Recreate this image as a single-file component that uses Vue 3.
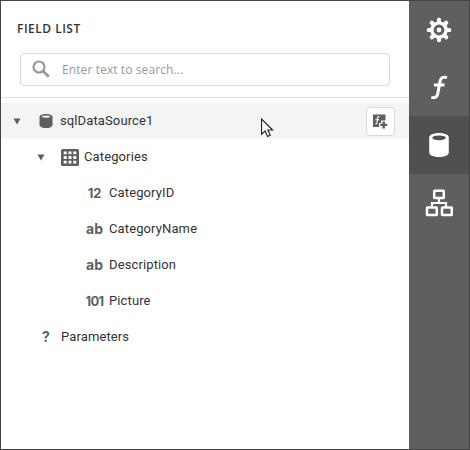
<script setup>
const rows = [
  { label: 'sqlDataSource1', level: 0, icon: 'database', open: true, selected: true },
  { label: 'Categories', level: 1, icon: 'table', open: true },
  { label: 'CategoryID', level: 2, glyph: '12' },
  { label: 'CategoryName', level: 2, glyph: 'ab' },
  { label: 'Description', level: 2, glyph: 'ab' },
  { label: 'Picture', level: 2, glyph: '101' },
  { label: 'Parameters', level: 0, glyph: '?', root: true },
]
</script>

<template>
  <div class="window">
    <main class="panel">
      <header class="head">
        <h1 class="title">FIELD LIST</h1>
        <div class="search">
          <svg class="search-icon" width="18" height="18" viewBox="0 0 18 18">
            <circle cx="7" cy="7" r="5.5" fill="none" stroke="#999" stroke-width="2.2" />
            <path d="M11 11L16.8 16.8" stroke="#999" stroke-width="2.8" />
          </svg>
          <span class="placeholder">Enter text to search...</span>
        </div>
      </header>
      <ul class="tree">
        <li v-for="row in rows" :key="row.label" class="row" :class="['level-' + row.level, { selected: row.selected, root: row.root }]">
          <span class="arrow">
            <svg v-if="row.open" width="8" height="7" viewBox="0 0 8 7"><path d="M.5 0.5H7.5L4 6.5Z" fill="#5f5f5f" /></svg>
          </span>
          <span class="icon">
            <svg v-if="row.icon === 'database'" width="14" height="16" viewBox="0 0 14 16">
              <path d="M.5 4C.5 -.1 13.5 -.1 13.5 4V12C13.5 16.1 .5 16.1 .5 12Z" fill="#5f5f5f" />
              <ellipse cx="7" cy="3.6" rx="4" ry="1.2" fill="#f4f4f4" />
            </svg>
            <svg v-else-if="row.icon === 'table'" width="18" height="17" viewBox="0 0 18 17">
              <rect width="18" height="17" rx="1.5" fill="#5f5f5f" />
              <path d="M2.7 2.5h3v2.7h-3zM7.5 2.5h3v2.7h-3zM12.3 2.5h3v2.7h-3zM2.7 7.1h3v2.8h-3zM7.5 7.1h3v2.8h-3zM12.3 7.1h3v2.8h-3zM2.7 11.8h3v2.7h-3zM7.5 11.8h3v2.7h-3zM12.3 11.8h3v2.7h-3z" fill="#fff" />
            </svg>
            <span v-else class="glyph" :class="{ number: row.level === 2 && row.glyph !== 'ab', binary: row.glyph === '101' }">{{ row.glyph }}</span>
          </span>
          <span class="label">{{ row.label }}</span>
          <button v-if="row.selected" class="add" aria-label="Add calculated field">
            <svg width="15" height="15" viewBox="0 0 15 15">
              <path d="M0 .5H12.5V13H0Z" fill="#5f5f5f" />
              <path d="M8 6.5H15V15H6V9H8Z" fill="#fff" />
              <path d="M6.5 2.6H5.6Q4.7 2.6 4.6 3.6L4.1 8.6Q3.9 10 2.2 10M2.5 5.7H6" fill="none" stroke="#eee" stroke-width="1.2" />
              <path d="M10.7 7.4V14.4M7.2 10.9H14.2" stroke="#5f5f5f" stroke-width="2.4" />
            </svg>
          </button>
        </li>
      </ul>
    </main>
    <nav class="tabs">
      <button class="tab" aria-label="Properties">
        <svg width="26" height="26" viewBox="0 0 26 26">
          <g fill="#fff">
            <rect v-for="a in [0, 45, 90, 135]" :key="a" x="11" y=".8" width="4" height="24.4" rx="1.6" :transform="`rotate(${a} 13 13)`" />
            <circle cx="13" cy="13" r="8.8" />
          </g>
          <circle cx="13" cy="13" r="3.9" fill="#fff" stroke="#5f5f5f" stroke-width="3" />
        </svg>
      </button>
      <button class="tab" aria-label="Expressions">
        <svg width="26" height="26" viewBox="0 0 26 26">
          <path d="M21 2.6Q15.2 .8 14.2 5.9L11.7 18.9Q10.8 23.7 5.3 22.4M8 10H18.5" fill="none" stroke="#fff" stroke-width="3" />
        </svg>
      </button>
      <button class="tab active" aria-label="Field list">
        <svg width="26" height="26" viewBox="0 0 26 26">
          <path d="M3.2 5.5C3.2 -.5 22.8 -.5 22.8 5.5V20.6C22.8 26.6 3.2 26.6 3.2 20.6Z" fill="#fff" />
          <ellipse cx="13" cy="5.8" rx="6.7" ry="2.4" fill="#505050" />
        </svg>
      </button>
      <button class="tab" aria-label="Report explorer">
        <svg width="28" height="28" viewBox="0 0 28 28">
          <g fill="none" stroke="#fff" stroke-width="2.5">
            <rect x="9.2" y="1.7" width="9.6" height="7.4" rx=".6" />
            <rect x="2" y="18.4" width="9.8" height="7.6" rx=".6" />
            <rect x="17" y="18.4" width="9.8" height="7.6" rx=".6" />
            <path d="M14 10V14M7 18V14H21V18" stroke-width="2.2" />
          </g>
        </svg>
      </button>
    </nav>
    <svg class="pointer" width="13" height="20" viewBox="0 0 13 20">
      <path d="M.6 1V16.2L4.2 12.9L6.5 18.4L9.2 17.2L6.9 12H11.6Z" fill="#fff" stroke="#1d1d2c" stroke-width="1.1" />
    </svg>
  </div>
</template>

<style>
body { margin: 0; }
</style>

<style scoped>
.window {
  position: relative;
  box-sizing: border-box;
  display: flex;
  width: 470px;
  height: 450px;
  border: 1px solid #444;
  background: #fff;
}
.panel { flex: 1; min-width: 0; }
.head {
  box-sizing: border-box;
  height: 97px;
  padding: 19px 19px 0;
  border-bottom: 1px solid #e0e0e0;
}
.title {
  margin: 0 0 15px -3px;
  font: 600 12px/18px "Open Sans", sans-serif;
  letter-spacing: 0.5px;
  color: #333;
}
.search {
  box-sizing: border-box;
  display: flex;
  align-items: center;
  width: 370px;
  height: 33px;
  padding-left: 11px;
  border: 1px solid #dadada;
  border-radius: 4px;
}
.search-icon { margin-top: -2px; }
.placeholder {
  margin-left: 12px;
  font: 12px/18px "Open Sans", sans-serif;
  letter-spacing: 0.1px;
  color: #999;
}
.tree { list-style: none; margin: 0; padding: 5px 0 0; }
.row {
  box-sizing: border-box;
  display: flex;
  align-items: center;
  height: 36px;
  padding-right: 14px;
}
.selected { background: #f4f4f4; }
.level-0 { padding-left: 12px; }
.level-1 { padding-left: 36px; }
.level-2 { padding-left: 61px; }
.arrow { display: flex; width: 8px; }
.icon {
  display: flex;
  justify-content: center;
  width: 20px;
  margin-left: 15px;
}
.level-2 .icon { padding-right: 1px; width: 19px; }
.glyph {
  font: 700 14px/18px Inter, sans-serif;
  color: #5f5f5f;
}
.number { font-size: 13px; letter-spacing: -0.2px; }
.binary { letter-spacing: -0.7px; }
.label {
  margin-left: 4px;
  font: 13px/18px Roboto, sans-serif;
  letter-spacing: 0.12px;
  color: #333;
}
.root .label { margin-left: 5px; }
.add {
  display: flex;
  align-items: center;
  justify-content: center;
  box-sizing: border-box;
  width: 29px;
  height: 29px;
  margin-left: auto;
  padding: 0;
  border: 1px solid #dadada;
  border-radius: 4px;
  background: #fff;
}
.tabs { width: 60px; background: #5f5f5f; }
.tab {
  display: flex;
  align-items: center;
  justify-content: center;
  width: 60px;
  height: 57.7px;
  padding: 0;
  border: 0;
  background: none;
}
.active { background: #505050; }
.pointer { position: absolute; left: 260px; top: 117px; }
</style>
